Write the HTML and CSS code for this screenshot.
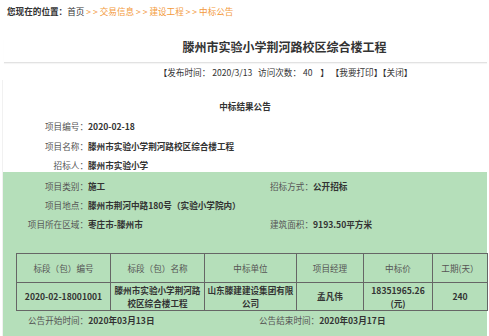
FILE: index.html
```html
<!DOCTYPE html>
<html lang="zh-CN">
<head>
    <meta charset="UTF-8">
    <title>中标公告</title>
    <link rel="stylesheet" href="styles.css">
</head>
<body>

<div class="crumb">
    <b>您现在的位置：</b>首页<span class="path"> &gt; &gt; 交易信息 &gt; &gt; 建设工程 &gt; &gt; 中标公告</span>
</div>

<h1 class="title">滕州市实验小学荆河路校区综合楼工程</h1>
<div class="meta">【发布时间：&nbsp;2020/3/13&nbsp;&nbsp;&nbsp;访问次数：&nbsp;40&nbsp;&nbsp;&nbsp;&nbsp;】&nbsp;【我要打印】【关闭】</div>

<div class="notice">
    <h2>中标结果公告</h2>

    <div class="fields">
        <span class="label">项目编号：</span><span class="value">2020-02-18</span>
        <span class="label">项目名称：</span><span class="value">滕州市实验小学荆河路校区综合楼工程</span>
        <span class="label">招标人：</span><span class="value">滕州市实验小学</span>
    </div>

    <div class="green">
        <div class="fields two">
            <span class="label">项目类别：</span><span class="value">施工</span>
            <span class="label">招标方式：</span><span class="value">公开招标</span>
            <span class="label">项目地点：</span><span class="value wide">滕州市荆河中路180号（实验小学院内）</span>
            <span class="label">项目所在区域：</span><span class="value">枣庄市-滕州市</span>
            <span class="label">建筑面积：</span><span class="value">9193.50平方米</span>
        </div>

        <table class="bids">
            <tr>
                <th class="c1">标段（包）编号</th>
                <th class="c2">标段（包）名称</th>
                <th class="c3">中标单位</th>
                <th class="c4">项目经理</th>
                <th class="c5">中标价</th>
                <th class="c6">工期(天）</th>
            </tr>
            <tr>
                <td>2020-02-18001001</td>
                <td>滕州市实验小学荆河路校区综合楼工程</td>
                <td>山东滕建建设集团有限公司</td>
                <td>孟凡伟</td>
                <td>18351965.26<br>(元)</td>
                <td>240</td>
            </tr>
        </table>

        <div class="dates">
            <div class="date-start"><span class="label">公告开始时间：</span><span class="value">2020年03月13日</span></div>
            <div class="date-end"><span class="label">公告结束时间：</span><span class="value">2020年03月17日</span></div>
        </div>
    </div>
</div>

</body>
</html>
```

FILE: styles.css
```css
body {
    margin: 0;
    font-family: "Noto Sans CJK SC", "Noto Sans", sans-serif;
    font-size: 8.6px;
    color: #333;
    background: #fff;
}
.crumb {
    height: 22px;
    line-height: 22px;
    padding-left: 7px;
    color: #333;
}
.crumb .path {
    color: #f39a3c;
}
.title {
    margin: 17px 2px 0 4px;
    padding: 0 0 7px 78px;
    font-size: 12px;
    line-height: 16px;
    font-weight: bold;
    color: #333;
    text-align: center;
    border-bottom: 1px solid #e2e2e2;
    box-shadow: 0 1px 1px rgba(0, 0, 0, 0.04);
}
.meta {
    margin-top: 3px;
    padding-left: 82px;
    line-height: 12px;
    text-align: center;
    color: #333;
}
.notice {
    margin: 2px 2px 0 2px;
    padding-top: 20px;
    border-left: 1px solid #f1f1f1;
}
.notice h2 {
    margin: 0;
    font-size: 8.6px;
    line-height: 12px;
    font-weight: bold;
    text-align: center;
    color: #333;
}
.fields {
    display: grid;
    grid-template-columns: 85px 1fr;
    row-gap: 7.5px;
    margin-top: 8px;
    line-height: 12px;
}
.label {
    color: #555;
    text-align: right;
    white-space: nowrap;
}
.value {
    font-weight: bold;
    color: #333;
    white-space: nowrap;
}
.green {
    background: #b5dfba;
    padding: 8px 0 14px;
    margin-top: 1px;
}
.fields.two {
    margin-top: 0;
    row-gap: 7px;
    grid-template-columns: 85px 182px 43px 1fr;
}
.fields.two .wide {
    grid-column: span 3;
}
.bids {
    margin: 23px 0 0 13px;
    width: 453px;
    border-collapse: collapse;
    table-layout: fixed;
}
.bids th,
.bids td {
    border: 1px solid #666;
    padding: 0 1px;
    text-align: center;
    line-height: 13px;
}
.bids th {
    height: 28px;
    font-weight: normal;
    color: #555;
}
.bids td {
    height: 27px;
    font-weight: bold;
    color: #333;
}
.c1 { width: 91px; }
.c2 { width: 91px; }
.c3 { width: 89px; }
.c4 { width: 64px; }
.c5 { width: 66px; }
.c6 { width: 52px; }
.dates {
    display: flex;
    margin-top: 3px;
    line-height: 12px;
}
.date-start {
    width: 231px;
    padding-left: 25px;
}
```
